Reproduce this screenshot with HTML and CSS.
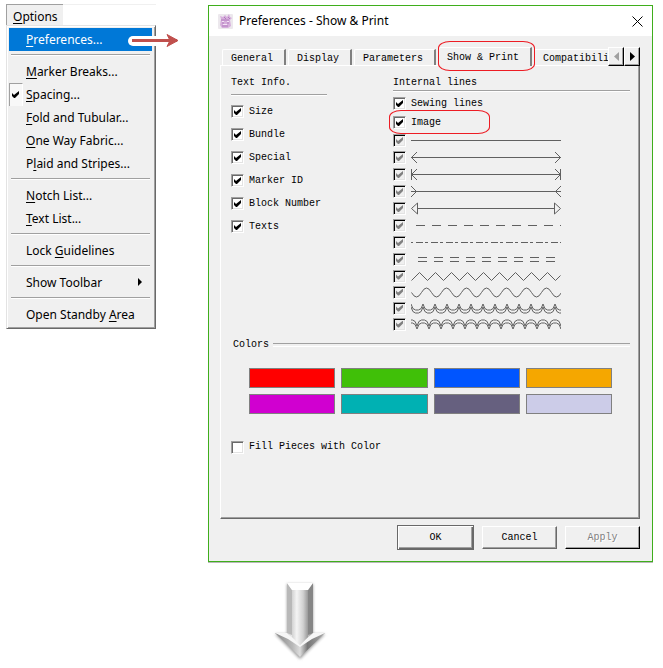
FILE: index.html
```
<!DOCTYPE html>
<html lang="en">
<head>
  <meta charset="UTF-8">
  <meta name="viewport" content="width=device-width, initial-scale=1.0">
  <title>Preferences - Show &amp; Print</title>
  <link rel="stylesheet" href="styles.css">
</head>
<body>
  <div class="page">
    <div class="steps">
      <nav class="menu">
        <div class="menubar"><button class="menu-title"><u>O</u>ptions</button></div>
        <div class="popup">
          <button class="item active"><u>P</u>references...</button>
          <hr>
          <button class="item"><u>M</u>arker Breaks...</button>
          <button class="item checked"><u>S</u>pacing...</button>
          <button class="item"><u>F</u>old and Tubular...</button>
          <button class="item"><u>O</u>ne Way Fabric...</button>
          <button class="item">P<u>l</u>aid and Stripes...</button>
          <hr>
          <button class="item"><u>N</u>otch List...</button>
          <button class="item"><u>T</u>ext List...</button>
          <hr>
          <button class="item">Lock <u>G</u>uidelines</button>
          <hr>
          <button class="item submenu">Show Toolbar</button>
          <hr>
          <button class="item">Open Standby <u>A</u>rea</button>
        </div>
        <svg class="pointer" width="54" height="18" viewBox="0 0 54 18">
          <path d="M5 9H28" stroke="#fff" stroke-width="10" stroke-linecap="round"/>
          <path d="M4 8.5H49" stroke="#c0504d" stroke-width="3"/>
          <path d="M39 2.5L50 8.5L39 14.5L42 8.5Z" fill="#c0504d" stroke="#c0504d" stroke-linejoin="round"/>
        </svg>
      </nav>

      <div class="dialog">
        <div class="header">
          <svg width="15" height="15" viewBox="0 0 15 15">
            <rect width="15" height="15" rx="1" fill="#ece8ed"/>
            <path d="M3 5L2 2L5 3L7 1L9 3L11 0L12 3L14 4L12 6L13 12L10 14H4L2 11Z" fill="#d6aedc"/>
            <path d="M3 6H11M4 9H6M9 9H11M4 12H10M6 3L8 5M10 3L12 5" stroke="#b07abd"/>
            <path d="M4 7.5H6M9 7.5H11M5 10.5H9" stroke="#f3e3f5"/>
          </svg>
          <span class="title">Preferences - Show &amp; Print</span>
          <button class="close" aria-label="Close">
            <svg width="11" height="11" viewBox="0 0 11 11"><path d="M.5 .5L10.5 10.5M10.5 .5L.5 10.5" stroke="#000"/></svg>
          </button>
        </div>

        <div class="main">
          <div class="tab-row">
            <div class="tabs" role="tablist">
              <button class="tab" role="tab">General</button>
              <button class="tab" role="tab">Display</button>
              <button class="tab" role="tab">Parameters</button>
              <button class="tab selected" role="tab" aria-selected="true">Show &amp; Print</button>
              <button class="tab" role="tab">Compatibili</button>
            </div>
            <button class="scroll" aria-label="Previous tabs" disabled><svg width="5" height="9" viewBox="0 0 5 9"><path d="M5 0V9L0 4.500Z" fill="#a0a0a0"/></svg></button>
            <button class="scroll" aria-label="Next tabs"><svg width="5" height="9" viewBox="0 0 5 9"><path d="M0 0V9L5 4.500Z" fill="#000"/></svg></button>
            <span class="mark mark-tab"></span>
          </div>

          <div class="panel">
            <div class="columns">
              <div class="text-info">
                <h3>Text Info.</h3>
                <label><input type="checkbox" checked>Size</label>
                <label><input type="checkbox" checked>Bundle</label>
                <label><input type="checkbox" checked>Special</label>
                <label><input type="checkbox" checked>Marker ID</label>
                <label><input type="checkbox" checked>Block Number</label>
                <label><input type="checkbox" checked>Texts</label>
              </div>
              <div class="lines">
                <h3>Internal lines</h3>
                <label class="named"><input type="checkbox" checked>Sewing lines</label>
                <label class="named"><input type="checkbox" checked>Image<span class="mark mark-image"></span></label>
                <label><input type="checkbox" aria-label="Solid" checked disabled>
                  <svg width="150" height="15" viewBox="0 0 150 15"><path d="M0 7.500H150"/></svg></label>
                <label><input type="checkbox" aria-label="Arrows out" checked disabled>
                  <svg width="150" height="15" viewBox="0 0 150 15"><path d="M0 7.500H150M6 2L.5 7.500L6 13M144 2L149.500 7.500L144 13"/></svg></label>
                <label><input type="checkbox" aria-label="Arrows with stops" checked disabled>
                  <svg width="150" height="15" viewBox="0 0 150 15"><path d="M0 7.500H150M6 2L.5 7.500L6 13M144 2L149.500 7.500L144 13M.5 2V13M149.500 2V13"/></svg></label>
                <label><input type="checkbox" aria-label="Arrows in" checked disabled>
                  <svg width="150" height="15" viewBox="0 0 150 15"><path d="M0 7.500H150M0 2L5.500 7.500L0 13M150 2L144.500 7.500L150 13"/></svg></label>
                <label><input type="checkbox" aria-label="Triangles" checked disabled>
                  <svg width="150" height="15" viewBox="0 0 150 15"><path d="M6.500 7.500H143.500M6.500 2V13L.5 7.500ZM143.500 2V13L149.500 7.500Z"/></svg></label>
                <label><input type="checkbox" aria-label="Dashed" checked disabled>
                  <svg width="150" height="15" viewBox="0 0 150 15"><path d="M5 7.500H150" stroke-dasharray="9 7"/></svg></label>
                <label><input type="checkbox" aria-label="Dash dot" checked disabled>
                  <svg width="150" height="15" viewBox="0 0 150 15"><path d="M0 7.500H2M5 7.500H150" stroke-dasharray="7 2 3 3"/></svg></label>
                <label><input type="checkbox" aria-label="Double dashed" checked disabled>
                  <svg width="150" height="15" viewBox="0 0 150 15"><path d="M7 5.500H144" stroke-dasharray="9 7"/><path d="M7 9.500H144" stroke-dasharray="9 7"/></svg></label>
                <label class="wave"><input type="checkbox" aria-label="Zigzag" checked disabled>
                  <svg width="150" height="15" viewBox="0 0 150 15"><path d="M.5 11.500l8-8l8 8l8-8l8 8l8-8l8 8l8-8l8 8l8-8l8 8l8-8l8 8l8-8l8 8l8-8l8 8l8-8l8 8l5-5"/></svg></label>
                <label class="wave"><input type="checkbox" aria-label="Wave" checked disabled>
                  <svg width="150" height="15" viewBox="0 0 150 15"><path d="M.5 7.500q5 9 10 0t10 0t10 0t10 0t10 0t10 0t10 0t10 0t10 0t10 0t10 0t10 0t10 0t10 0t10 0"/></svg></label>
                <label class="wave"><input type="checkbox" aria-label="Double scallop up" checked disabled>
                  <svg width="150" height="15" viewBox="0 0 150 15">
                    <defs>
                      <path id="cup" d="M0 3q1.500 6 4.500 6h3q3 0 4.500-6"/>
                      <g id="cups"><use href="#cup"/><use href="#cup" x="12"/><use href="#cup" x="24"/><use href="#cup" x="36"/></g>
                      <g id="cup-row"><use href="#cups"/><use href="#cups" x="48"/><use href="#cups" x="96"/><use href="#cups" x="144"/></g>
                    </defs>
                    <use href="#cup-row"/>
                    <use href="#cup-row" y="3"/>
                  </svg></label>
                <label class="wave"><input type="checkbox" aria-label="Double scallop down" checked disabled>
                  <svg width="150" height="15" viewBox="0 0 150 15">
                    <defs>
                      <path id="cap" d="M-6 9q1.500-6 4.500-6h3q3 0 4.500 6"/>
                      <g id="caps"><use href="#cap"/><use href="#cap" x="12"/><use href="#cap" x="24"/><use href="#cap" x="36"/></g>
                      <g id="cap-row"><use href="#caps"/><use href="#caps" x="48"/><use href="#caps" x="96"/><use href="#caps" x="144"/></g>
                    </defs>
                    <use href="#cap-row"/>
                    <use href="#cap-row" y="3"/>
                  </svg></label>
              </div>
            </div>

            <div class="group-title">Colors</div>
            <div class="swatches">
              <button class="swatch red" aria-label="Red"></button>
              <button class="swatch green" aria-label="Green"></button>
              <button class="swatch blue" aria-label="Blue"></button>
              <button class="swatch orange" aria-label="Orange"></button>
              <button class="swatch magenta" aria-label="Magenta"></button>
              <button class="swatch teal" aria-label="Teal"></button>
              <button class="swatch slate" aria-label="Slate"></button>
              <button class="swatch lavender" aria-label="Lavender"></button>
            </div>
            <label class="fill"><input type="checkbox">Fill Pieces with Color</label>
          </div>

          <div class="footer">
            <button class="button btn-ok">OK</button>
            <button class="button">Cancel</button>
            <button class="button btn-apply" disabled>Apply</button>
          </div>
        </div>
      </div>
    </div>

    <svg class="next" width="70" height="84" viewBox="0 0 70 84">
      <defs>
        <linearGradient id="shaft"><stop offset="0" stop-color="#d2d2d2"/><stop offset=".3" stop-color="#f4f4f4"/><stop offset=".7" stop-color="#d0d0d0"/><stop offset="1" stop-color="#999"/></linearGradient>
        <linearGradient id="head"><stop offset="0" stop-color="#888"/><stop offset=".35" stop-color="#b8b8b8"/><stop offset=".5" stop-color="#ddd"/><stop offset=".65" stop-color="#777"/><stop offset="1" stop-color="#aaa"/></linearGradient>
        <filter id="soft" x="-20%" y="-20%" width="140%" height="140%"><feGaussianBlur stdDeviation="1.5"/></filter>
      </defs>
      <path d="M22 5H48V55H60L35 80L10 55H22Z" fill="#999" filter="url(#soft)"/>
      <path d="M22 4H48V54H60L35 78L10 54H22Z" fill="url(#head)"/>
      <path d="M22 4H48V54L35 67L22 54Z" fill="url(#shaft)"/>
      <path d="M22 4L27 11V56L22 54Z" fill="#b8b8b8"/>
      <path d="M48 4L43 11V56L48 54Z" fill="#868686"/>
      <path d="M22 4H48L43 11H27Z" fill="#fff"/>
      <path d="M10 54H22L29 60L35 66L41 60L48 54H60L47 60L35 68L23 60Z" fill="#f6f6f6"/>
      <path d="M27 11H43V58L35 66L27 58Z" fill="url(#shaft)"/>
    </svg>
  </div>
</body>
</html>
```
FILE: styles.css
```
* {
  box-sizing: border-box;
}
body {
  margin: 0;
  background: #fff;
  color: #000;
}
button {
  margin: 0;
  padding: 0;
  border: 0;
  background: #f0f0f0;
  color: inherit;
  font: inherit;
}
svg {
  display: block;
  flex: none;
}
.page {
  padding: 4px 10px 0 6px;
}
.steps {
  display: flex;
  align-items: flex-start;
  gap: 52px;
}

/* options menu */
.menu {
  position: relative;
  flex: none;
  width: 150px;
  font-family: "Noto Sans", "Open Sans", sans-serif;
  font-size: 12px;
  line-height: 23px;
}
.menu u {
  text-underline-offset: 2px;
}
.menubar {
  display: flex;
  height: 21px;
  border-top: 1px solid #f0f0f0;
}
.menu-title {
  margin-top: -1px;
  padding: 0 5px 0 6px;
  border-top: 1px solid #a0a0a0;
  border-left: 1px solid #a0a0a0;
}
.popup {
  padding: 2px 3px 2px 2px;
  border: 1px solid #e3e3e3;
  border-right: 1px solid #696969;
  border-bottom: 1px solid #696969;
  background: #f0f0f0;
  box-shadow: inset 1px 1px #fff, inset -1px -1px #a0a0a0;
}
.item {
  position: relative;
  display: block;
  width: 100%;
  height: 23px;
  padding-left: 17px;
  text-align: left;
  white-space: nowrap;
}
.item.active {
  background: #0078d7;
  color: #fff;
}
.popup hr {
  height: 2px;
  margin: 3px 2px 4px;
  border: 0;
  border-top: 1px solid #a0a0a0;
  border-bottom: 1px solid #fff;
}
.item.checked::before {
  content: '';
  position: absolute;
  top: 0;
  left: 0;
  width: 12px;
  height: 23px;
  border: 1px solid #fff;
  border-top-color: #a0a0a0;
  border-left-color: #a0a0a0;
  background: #f8f8f8;
}
.item.checked::after {
  content: '';
  position: absolute;
  top: 8px;
  left: 3px;
  width: 7px;
  height: 7px;
  background: #000;
  clip-path: polygon(0 2px, 2px 4px, 7px 0, 7px 3px, 3px 7px, 2px 7px, 0 5px);
}
.item.submenu::after {
  content: '';
  position: absolute;
  top: 7px;
  right: 10px;
  border: 4px solid transparent;
  border-left-color: #000;
  border-right: 0;
}
.pointer {
  position: absolute;
  top: 28px;
  left: 122px;
}

/* preferences dialog */
.dialog {
  flex: 1;
  min-width: 0;
  margin-top: 1px;
  border: 1px solid #3fae1c;
  background: #f0f0f0;
  box-shadow: 0 1px #b8b8b8;
  font-family: "Liberation Mono", monospace;
  font-size: 10px;
  line-height: 14px;
}
.header {
  display: flex;
  align-items: center;
  gap: 6px;
  height: 30px;
  padding: 0 9px;
  background: #fff;
  font-family: "Noto Sans", "Open Sans", sans-serif;
  font-size: 12px;
}
.close {
  margin-left: auto;
  background: none;
}
.main {
  padding: 11px 12px 11px 11px;
}
.tab-row {
  position: relative;
  display: flex;
  align-items: flex-end;
  height: 19px;
  margin-bottom: -1px;
}
.tabs {
  display: flex;
  flex: 1;
  align-items: flex-end;
  min-width: 0;
  height: 19px;
  padding: 0 0 1px 2px;
  overflow: hidden;
}
.tab {
  flex: none;
  height: 16px;
  margin-right: 2px;
  padding: 2px 11px 0 8px;
  border-top: 1px solid #fff;
  border-left: 1px solid #fff;
  border-right: 2px solid #808080;
  border-radius: 2px 0 0 0;
  line-height: 14px;
}
.tab.selected {
  height: 19px;
  margin-bottom: -1px;
}
.scroll {
  display: flex;
  flex: none;
  justify-content: center;
  align-items: center;
  width: 16px;
  height: 19px;
  border: 1px solid #fff;
  border-right-color: #000;
  border-bottom-color: #000;
  box-shadow: inset -1px -1px #a0a0a0;
}
.mark {
  position: absolute;
  border: 1px solid #ed1c24;
  border-radius: 12px / 7px;
}
.mark-tab {
  top: -6px;
  left: 218px;
  width: 97px;
  height: 30px;
}
.mark-image {
  top: -3px;
  left: -4px;
  width: 101px;
  height: 24px;
}
.panel {
  padding: 10px 9px 64px 10px;
  border: 1px solid #fff;
  border-right-color: #696969;
  border-bottom-color: #696969;
  box-shadow: inset -1px -1px #a0a0a0;
}
.columns {
  display: grid;
  grid-template-columns: 96px 1fr;
  gap: 66px;
}
h3 {
  margin: 0;
  border-bottom: 1px solid #a0a0a0;
  box-shadow: 0 1px #fff;
  font-size: 10px;
  font-weight: normal;
}
label {
  position: relative;
  display: flex;
  align-items: center;
  gap: 5px;
  white-space: nowrap;
}
.text-info h3 {
  margin-bottom: 5px;
  padding-bottom: 4px;
}
.text-info label {
  height: 23px;
}
.lines h3 {
  margin-bottom: 3px;
}
.lines label {
  height: 17px;
}
.lines .named {
  height: 19px;
}
.lines .wave {
  height: 16px;
}
.lines svg {
  fill: none;
  stroke: #606060;
}
input[type="checkbox"] {
  appearance: none;
  flex: none;
  width: 13px;
  height: 13px;
  margin: 0;
  padding: 2px;
  border: 1px solid #fff;
  border-top-color: #a0a0a0;
  border-left-color: #a0a0a0;
  background: #fff;
  box-shadow: inset 1px 1px #696969, inset -1px -1px #e3e3e3;
}
input[type="checkbox"]:checked::before {
  content: '';
  display: block;
  width: 7px;
  height: 7px;
  background: #000;
  clip-path: polygon(0 2px, 2px 4px, 7px 0, 7px 3px, 3px 7px, 2px 7px, 0 5px);
}
input[type="checkbox"]:disabled {
  background: #f0f0f0;
  box-shadow: inset 1px 1px #000, inset -1px -1px #e3e3e3;
}
input[type="checkbox"]:disabled::before {
  background: #808080;
}
.group-title {
  display: flex;
  align-items: center;
  gap: 4px;
  margin-top: 6px;
  padding-left: 2px;
}
.group-title::after {
  content: '';
  flex: 1;
  height: 2px;
  border-top: 1px solid #a0a0a0;
  border-bottom: 1px solid #fff;
}
.swatches {
  display: grid;
  grid-template-columns: repeat(4, 1fr);
  gap: 6px;
  margin: 16px 18px 26px;
}
.swatch {
  height: 20px;
  border: 1px solid #808080;
}
.red { background: #ff0000; }
.green { background: #40c008; }
.blue { background: #0055ff; }
.orange { background: #f5a700; }
.magenta { background: #d000d0; }
.teal { background: #00b1b3; }
.slate { background: #66607f; }
.lavender { background: #cccce8; }

.footer {
  display: flex;
  justify-content: flex-end;
  align-items: center;
  gap: 8px;
  margin-top: 6px;
}
.button {
  width: 75px;
  height: 23px;
  border: 1px solid #fff;
  border-right-color: #696969;
  border-bottom-color: #696969;
  box-shadow: inset -1px -1px #a0a0a0;
}
.btn-ok {
  width: 77px;
  height: 25px;
  border-color: #696969;
  box-shadow: inset 1px 1px #fff, inset -1px -1px #696969, inset -2px -2px #a0a0a0;
}
.btn-apply {
  border-right-color: #000;
  border-bottom-color: #000;
  color: #808080;
  text-shadow: 1px 1px #fff;
}

.next {
  margin: 17px 0 0 40%;
}
```
